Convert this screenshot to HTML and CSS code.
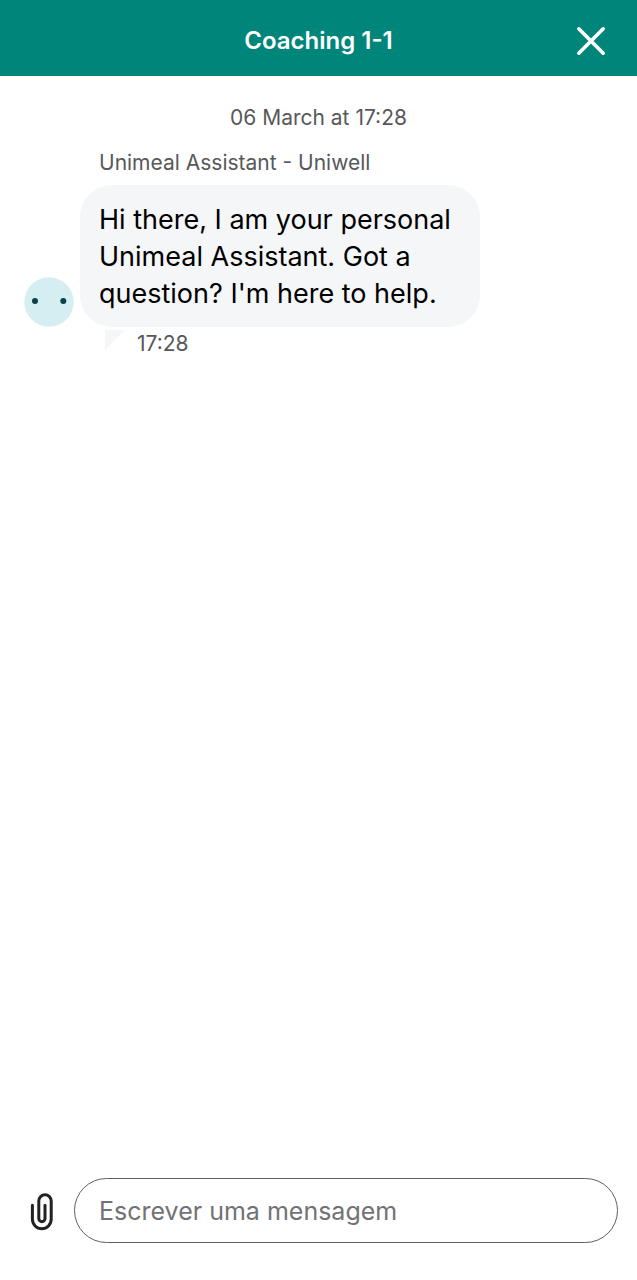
FILE: index.html
```
<!DOCTYPE html>
<html lang="en">
<head>
  <meta charset="UTF-8" />
  <meta name="viewport" content="width=device-width, initial-scale=1.0" />
  <title>Coaching 1-1</title>
  <link rel="stylesheet" href="styles.css">
</head>

<body>
  <header>
    <h1>Coaching 1-1</h1>
    <button class="close" type="button" aria-label="Close">
      <svg width="30" height="30" viewBox="0 0 30 30" fill="none" stroke="#fff" stroke-width="3.6" stroke-linecap="round">
        <path d="M2.8 2.8l24.4 24.4M27.2 2.8L2.8 27.2" />
      </svg>
    </button>
  </header>

  <main class="chat">
    <p class="date">06 March at 17:28</p>

    <div class="message">
      <svg class="avatar" width="50" height="50" viewBox="0 0 50 50">
        <circle cx="25" cy="25" r="24.7" fill="#d5eef1" />
        <circle cx="11" cy="24" r="3" fill="#0a4247" />
        <circle cx="39.3" cy="24" r="3" fill="#0a4247" />
      </svg>
      <p class="sender">Unimeal Assistant - Uniwell</p>
      <p class="bubble">Hi there, I am your personal Unimeal Assistant. Got a question? I'm here to help.</p>
      <div class="meta">
        <svg width="20" height="20" viewBox="0 0 20 20">
          <path d="M0 0h20L0 20z" fill="#f5f6f8" />
        </svg>
        <time datetime="17:28">17:28</time>
      </div>
    </div>
  </main>

  <form class="composer">
    <button class="attach" type="button" aria-label="Attach file">
      <svg width="24" height="40" viewBox="0 0 24 40" fill="none" stroke="#222" stroke-width="3" stroke-linecap="round">
        <path d="M2.4 14.3v14a9.4 9.4 0 0 0 18.8 0V10a6.2 6.2 0 0 0-12.4 0v17.6a3.1 3.1 0 0 0 6.2 0V14.3" />
      </svg>
    </button>
    <input type="text" placeholder="Escrever uma mensagem" aria-label="Escrever uma mensagem" />
  </form>
</body>
</html>
```

FILE: styles.css
```
* {
  box-sizing: border-box;
}

body {
  display: flex;
  flex-direction: column;
  min-height: 100vh;
  margin: 0;
  background: #fff;
  color: #000;
  font-family: Inter, "Liberation Sans", sans-serif;
}

h1,
p {
  margin: 0;
}

button {
  display: flex;
  padding: 0;
  border: 0;
  background: none;
  cursor: pointer;
}

header {
  display: grid;
  grid-template-columns: 1fr auto 1fr;
  align-items: center;
  padding: 23px 31px 17px;
  background: #00857a;
  color: #fff;
}

header h1 {
  grid-column: 2;
  font-size: 24px;
  font-weight: 600;
  line-height: 36px;
}

.close {
  justify-self: end;
}

/* Conversation */
.chat {
  flex: 1;
  padding: 28px 24px;
  color: #58585a;
  font-size: 21px;
  line-height: 28px;
}

.date {
  text-align: center;
}

.message {
  display: grid;
  grid-template-columns: 50px 400px;
  column-gap: 6px;
  margin-top: 17px;
}

.sender {
  grid-column: 2;
  padding-left: 19px;
}

.avatar {
  grid-column: 1;
  grid-row: 2;
  align-self: end;
}

.bubble {
  grid-column: 2;
  margin-top: 8px;
  padding: 16px 19px 15px;
  border-radius: 32px;
  background: #f5f6f8;
  color: #000;
  font-size: 27px;
  line-height: 37px;
}

.meta {
  display: flex;
  grid-column: 2;
  gap: 12px;
  margin-top: 3px;
  padding-left: 25px;
}

/* Message box */
.composer {
  display: flex;
  align-items: center;
  gap: 20px;
  padding: 16px 19px 37px 30px;
}

.composer input {
  flex: 1;
  min-width: 0;
  height: 65px;
  padding: 0 24px;
  border: 1px solid #606060;
  border-radius: 33px;
  background: #fff;
  color: #000;
  font: inherit;
  font-size: 25px;
}

.composer input::placeholder {
  color: #727274;
  opacity: 1;
}
```
